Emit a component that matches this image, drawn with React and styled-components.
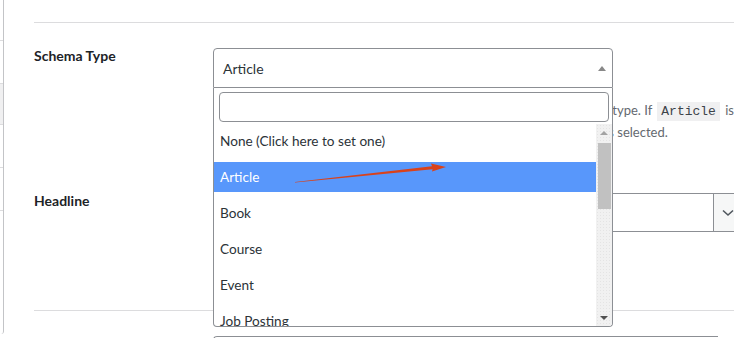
import styled, { createGlobalStyle } from 'styled-components';

const GlobalStyle = createGlobalStyle`
  html, body {
    margin: 0;
    padding: 0;
    background: #ffffff;
    overflow: hidden;
  }
  body {
    font-family: Lato, 'Noto Sans', sans-serif;
    color: #1d2327;
  }
`;

const Page = styled.div`
  position: relative;
  display: flex;
  width: 734px;
  height: 338px;
  overflow: hidden;
`;

const Rail = styled.div`
  display: flex;
  flex-direction: column;
  width: 3px;
  height: 334px;
  border-right: 1px solid #c3c4c7;
  border-bottom-right-radius: 3px;
  flex-shrink: 0;
`;

const RailCell = styled.div`
  height: ${(p) => p.$h}px;
  border-bottom: 1px solid #dcdcde;
  background: ${(p) => (p.$active ? '#f0f0f1' : 'transparent')};
  box-sizing: border-box;
`;

const Main = styled.div`
  flex: 1;
  margin-left: 30px;
  padding-top: 22px;
`;

const Divider = styled.div`
  border-top: 1px solid #dcdcde;
`;

const Row = styled.div`
  display: grid;
  grid-template-columns: 179px 1fr;
  padding: ${(p) => p.$pad};
`;

const Label = styled.div`
  font-size: 14px;
  font-weight: 700;
  line-height: 18px;
  color: #1d2327;
  margin-top: ${(p) => p.$offset || 0}px;
`;

const Field = styled.div`
  position: relative;
`;

const SelectBox = styled.div`
  position: relative;
  box-sizing: border-box;
  width: 400px;
  height: 40px;
  border: 1px solid #8c8f94;
  border-radius: 4px 4px 0 0;
  display: flex;
  align-items: center;
  padding: 0 9px;
  font-size: 14px;
  color: #2c3338;
  background: #fff;
`;

const Caret = styled.span`
  position: absolute;
  right: 6px;
  top: 17px;
  width: 0;
  height: 0;
  border-left: 4px solid transparent;
  border-right: 4px solid transparent;
  border-bottom: 5px solid #888;
`;

const Description = styled.p`
  margin: 12px 0 0;
  font-size: 13px;
  line-height: 21px;
  color: #646970;
  white-space: nowrap;
`;

const Code = styled.code`
  font-family: 'Liberation Mono', monospace;
  font-size: 13px;
  background: #f0f0f1;
  color: #3c434a;
  padding: 2px 4px;
  margin: 0 2px;
`;

const Dropdown = styled.div`
  position: absolute;
  top: 40px;
  left: 0;
  z-index: 5;
  box-sizing: border-box;
  width: 400px;
  height: 239px;
  background: #fff;
  border: 1px solid #8c8f94;
  border-top: none;
  border-radius: 0 0 4px 4px;
  display: flex;
  flex-direction: column;
  overflow: hidden;
`;

const SearchWrap = styled.div`
  padding: 4px 3px 0 5px;
`;

const SearchInput = styled.div`
  box-sizing: border-box;
  height: 30px;
  border: 1px solid #8c8f94;
  border-radius: 4px;
`;

const ListArea = styled.div`
  display: flex;
  flex: 1;
  margin-top: 2px;
  min-height: 0;
`;

const Options = styled.ul`
  list-style: none;
  margin: 0;
  padding: 2px 0 0;
  flex: 1;
  display: flex;
  flex-direction: column;
  gap: 6px;
  overflow: hidden;
`;

const Option = styled.li`
  flex-shrink: 0;
  height: 30px;
  display: flex;
  align-items: center;
  padding-left: 6px;
  font-size: 13.6px;
  color: ${(p) => (p.$active ? '#ffffff' : '#2c3338')};
  background: ${(p) => (p.$active ? '#5897fb' : 'transparent')};
`;

const Scrollbar = styled.div`
  width: 16px;
  display: flex;
  flex-direction: column;
  align-items: center;
  background-color: #f1f1f1;
  background-image: radial-gradient(#e4e4e4 0.6px, transparent 0.8px);
  background-size: 3px 3px;
`;

const ScrollArrow = styled.div`
  height: 17px;
  width: 16px;
  display: flex;
  align-items: center;
  justify-content: center;
  &::after {
    content: '';
    border-left: 4px solid transparent;
    border-right: 4px solid transparent;
    ${(p) =>
      p.$down
        ? 'border-top: 4px solid #505050;'
        : 'border-bottom: 4px solid #a3a3a3;'}
  }
`;

const Thumb = styled.div`
  width: 13px;
  height: 66px;
  margin-top: 2px;
  background: #c1c1c1;
`;

const Spacer = styled.div`
  flex: 1;
`;

const InputGroup = styled.div`
  display: flex;
  box-sizing: border-box;
  width: ${(p) => p.$w}px;
  height: 39px;
  border: 1px solid #8c8f94;
  border-right: none;
  border-bottom: ${(p) => (p.$open ? 'none' : '1px solid #8c8f94')};
  border-radius: 4px 0 0 4px;
  background: #fff;
`;

const TextPart = styled.div`
  flex: 1;
`;

const ToggleButton = styled.div`
  width: 40px;
  border-left: 1px solid #8c8f94;
  background: #f6f7f7;
  display: flex;
  align-items: center;
  padding-left: 8px;
  box-sizing: border-box;
`;

const Arrow = styled.svg`
  position: absolute;
  left: 0;
  top: 0;
  pointer-events: none;
  z-index: 10;
`;

const options = ['None (Click here to set one)', 'Article', 'Book', 'Course', 'Event', 'Job Posting'];

export default function App() {
  return (
    <>
      <GlobalStyle />
      <Page>
        <Rail>
          <RailCell $h={41} />
          <RailCell $h={43} />
          <RailCell $h={41} $active />
          <RailCell $h={43} />
          <RailCell $h={43} />
        </Rail>
        <Main>
          <Divider />
          <Row $pad="25px 0 0">
            <Label $offset={-1}>Schema Type</Label>
            <Field>
              <SelectBox>
                Article
                <Caret />
              </SelectBox>
              <Dropdown>
                <SearchWrap>
                  <SearchInput />
                </SearchWrap>
                <ListArea>
                  <Options>
                    {options.map((o) => (
                      <Option key={o} $active={o === 'Article'}>
                        {o}
                      </Option>
                    ))}
                  </Options>
                  <Scrollbar>
                    <ScrollArrow />
                    <Thumb />
                    <Spacer />
                    <ScrollArrow $down />
                  </Scrollbar>
                </ListArea>
              </Dropdown>
              <Description>
                Select the default schema type to be used for all the posts in this post type. If <Code>Article</Code> is
                <br />
                chosen, the Article Type field is shown below and all its default value is selected.
              </Description>
            </Field>
          </Row>
          <Row $pad="50px 0 78px">
            <Label $offset={-1}>Headline</Label>
            <InputGroup $w={540}>
              <TextPart />
              <ToggleButton>
                <svg width="12" height="8" viewBox="0 0 12 8">
                  <path d="M1 1.5 L6 6 L11 1.5" fill="none" stroke="#50575e" strokeWidth="1.6" />
                </svg>
              </ToggleButton>
            </InputGroup>
          </Row>
          <Divider />
          <Row $pad="25px 0 0">
            <span />
            <InputGroup $w={505} $open>
              <TextPart />
            </InputGroup>
          </Row>
        </Main>
        <Arrow width="734" height="338" viewBox="0 0 734 338">
          <polygon points="295,182 432,166.2 431,163.5 446,167 432,171.6 432.6,169.2 295,182.6" fill="#d9421b" />
        </Arrow>
      </Page>
    </>
  );
}
